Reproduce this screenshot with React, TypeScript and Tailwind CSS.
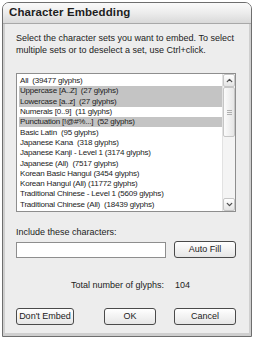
import { ChevronUp, ChevronDown } from 'lucide-react';

const items = [
  { label: 'All  (39477 glyphs)', sel: false },
  { label: 'Uppercase [A..Z]  (27 glyphs)', sel: true },
  { label: 'Lowercase [a..z]  (27 glyphs)', sel: true },
  { label: 'Numerals [0..9]  (11 glyphs)', sel: false },
  { label: 'Punctuation [!@#%...]  (52 glyphs)', sel: true },
  { label: 'Basic Latin  (95 glyphs)', sel: false },
  { label: 'Japanese Kana  (318 glyphs)', sel: false },
  { label: 'Japanese Kanji - Level 1 (3174 glyphs)', sel: false },
  { label: 'Japanese (All)  (7517 glyphs)', sel: false },
  { label: 'Korean Basic Hangul (3454 glyphs)', sel: false },
  { label: 'Korean Hangul (All) (11772 glyphs)', sel: false },
  { label: 'Traditional Chinese - Level 1 (5609 glyphs)', sel: false },
  { label: 'Traditional Chinese (All)  (18439 glyphs)', sel: false },
];

function XpButton({ children, className }: { children: React.ReactNode; className: string }) {
  return (
    <button
      className={`h-[17px] rounded-[3px] border border-[#4a4a4a] bg-gradient-to-b from-white to-[#e6e6e6] text-[9px] leading-none text-[#222] ${className}`}
    >
      {children}
    </button>
  );
}

export default function App() {
  return (
    <div className="w-[254px] h-[338px] bg-white pt-[2px] px-[2px] font-['Liberation_Sans',Arial,sans-serif] text-[#222]">
      <div className="h-[335px] flex flex-col rounded-t-[7px] border border-[#6e6e6e] overflow-hidden">
        {/* Title bar */}
        <div className="h-[21px] shrink-0 flex items-center pl-[6px] bg-gradient-to-b from-[#fafafa] via-[#ececec] to-[#d9d9d9] border-b border-[#a8a8a8]">
          <span className="text-[11.5px] font-bold tracking-[0.1px] text-[#1e1e1e]">Character Embedding</span>
        </div>

        {/* Body */}
        <div className="flex-1 flex flex-col bg-[#ededed] border-x-[2px] border-b-[3px] border-[#cfcfcf] pl-[11px] pr-[13px]">
          <p className="mt-[8px] text-[9px] leading-[12px]">
            Select the character sets you want to embed. To select multiple sets or to deselect a set, use Ctrl+click.
          </p>

          {/* List */}
          <div className="mt-[17px] h-[139px] flex border border-[#8e8e8e] bg-white">
            <div className="flex-1 pt-[2px] pl-[2px] overflow-hidden">
              {items.map((it) => (
                <div
                  key={it.label}
                  className={`h-[10.3px] flex items-center pl-[1px] text-[8px] tracking-[-0.2px] whitespace-pre ${it.sel ? 'bg-[#c4c4c4]' : ''}`}
                >
                  {it.label}
                </div>
              ))}
            </div>
            <div className="w-[13px] flex flex-col bg-[#f4f4f4] border-l border-[#e2e2e2]">
              <div className="h-[13px] flex items-center justify-center rounded-[2px] border border-[#c6c6c6] bg-gradient-to-b from-white to-[#e4e4e4]">
                <ChevronUp size={9} strokeWidth={3.5} className="text-[#4d4d4d]" />
              </div>
              <div className="h-[50px] flex flex-col items-center justify-center gap-[1px] rounded-[2px] border border-[#c6c6c6] bg-gradient-to-r from-[#fbfbfb] to-[#e6e6e6]">
                <div className="w-[5px] h-px bg-[#b0b0b0]" />
                <div className="w-[5px] h-px bg-[#b0b0b0]" />
                <div className="w-[5px] h-px bg-[#b0b0b0]" />
              </div>
              <div className="flex-1" />
              <div className="h-[13px] flex items-center justify-center rounded-[2px] border border-[#c6c6c6] bg-gradient-to-b from-white to-[#e4e4e4]">
                <ChevronDown size={9} strokeWidth={3.5} className="text-[#4d4d4d]" />
              </div>
            </div>
          </div>

          <div className="mt-[14px] text-[9px] leading-[12px]">Include these characters:</div>

          <div className="mt-[3px] flex items-center">
            <div className="w-[150px] h-[16px] border border-[#8e8e8e] bg-white" />
            <XpButton className="ml-auto w-[62px]">Auto Fill</XpButton>
          </div>

          <div className="mt-[21px] flex text-[9px] leading-[12px]">
            <span className="ml-[55px] w-[104px]">Total number of glyphs:</span>
            <span>104</span>
          </div>

          <div className="mt-[17px] flex items-center">
            <XpButton className="w-[58px]">Don't Embed</XpButton>
            <XpButton className="ml-[30px] w-[52px]">OK</XpButton>
            <XpButton className="ml-auto w-[62px]">Cancel</XpButton>
          </div>
        </div>
      </div>
    </div>
  );
}
